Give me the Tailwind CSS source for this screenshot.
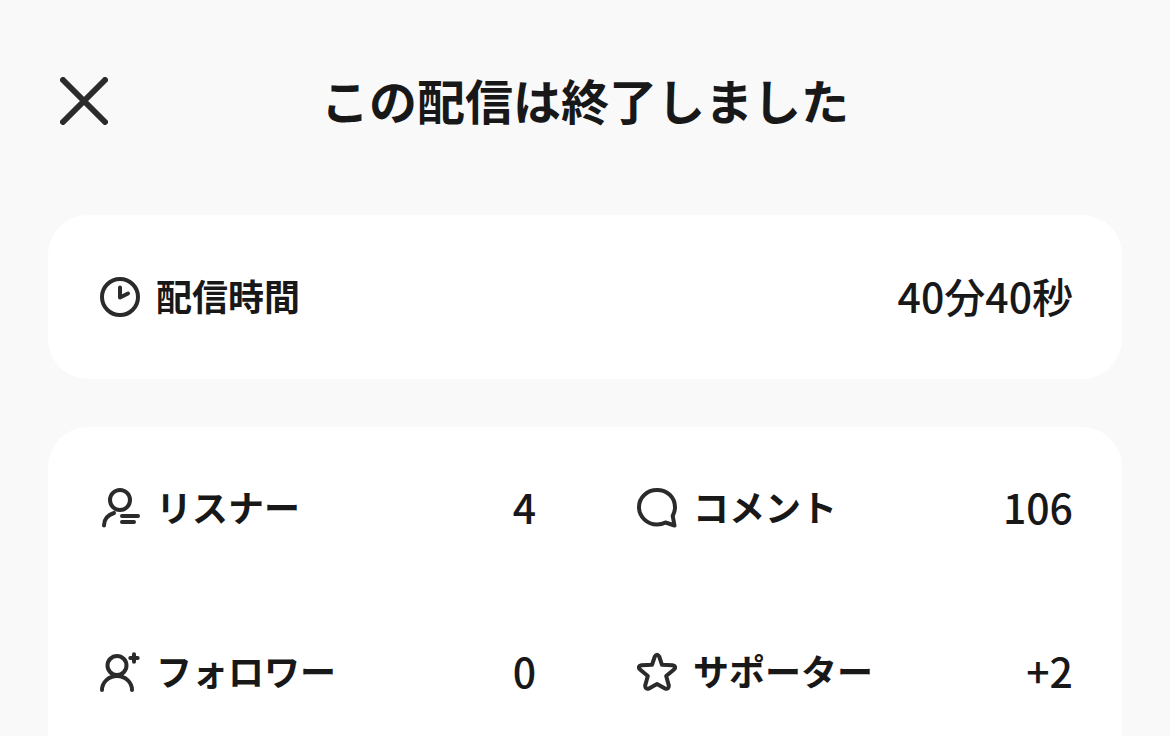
<!DOCTYPE html>
<html lang="ja">
<head>
  <meta charset="UTF-8" />
  <meta name="viewport" content="width=device-width, initial-scale=1.0" />
  <title>配信終了</title>
  <script src="https://cdn.jsdelivr.net/npm/@tailwindcss/browser@4"></script>
</head>
<body class="bg-[#f9f9f9] text-[#181818] font-['Noto_Sans_CJK_JP',sans-serif]">

<div class="min-h-screen flex flex-col px-12">

  <!-- Header -->
  <header class="grid grid-cols-[72px_1fr_72px] items-center pt-16 pb-[77px]">
    <button type="button" aria-label="閉じる" class="justify-self-center">
      <svg class="size-12" viewBox="0 0 48 48" fill="none" stroke="#2b2b2b" stroke-width="6" stroke-linecap="round">
        <path d="M3 3l42 42M45 3L3 45" />
      </svg>
    </button>
    <h1 class="pb-1 text-center text-5xl leading-[70px] font-bold">この配信は終了しました</h1>
  </header>

  <!-- Duration -->
  <section class="flex items-center justify-between py-[52px] pl-[52px] pr-[49px] rounded-[40px] bg-white">
    <div class="flex items-center gap-4">
      <svg class="size-10" viewBox="0 0 40 40" fill="none" stroke="#2b2b2b" stroke-width="4" stroke-linecap="round" stroke-linejoin="round">
        <circle cx="20" cy="20" r="18" />
        <path d="M20 10.500v10l8-4" />
      </svg>
      <h2 class="pb-1 text-4xl font-bold">配信時間</h2>
    </div>
    <p class="pb-1 text-[41px] leading-[56px] font-medium">40分40秒</p>
  </section>

  <!-- Stats -->
  <dl class="flex-1 grid grid-cols-2 content-start gap-x-[101px] gap-y-[104px] mt-12 pt-[51px] pl-[52px] pr-[49px] rounded-t-[40px] bg-white">
    <div class="flex items-center justify-between">
      <dt class="flex items-center gap-4">
        <svg class="size-10" viewBox="0 0 40 40" fill="none" stroke="#2b2b2b" stroke-width="4" stroke-linecap="round">
          <circle cx="20" cy="12" r="10" />
          <path d="M4 37.500c0-6 3.500-10.500 10-12.500M22 28h16M22 34h12" />
        </svg>
        <span class="pb-1 text-4xl font-bold">リスナー</span>
      </dt>
      <dd class="pb-1 text-[41px] leading-[56px] font-medium">4</dd>
    </div>

    <div class="flex items-center justify-between">
      <dt class="flex items-center gap-4">
        <svg class="size-10" viewBox="0 0 40 40" fill="none" stroke="#2b2b2b" stroke-width="4" stroke-linecap="round" stroke-linejoin="round">
          <path d="M28.500 34.500l9 3-1.800-9.500c1.500-2.800 2.300-5.600 2.300-8.500C38 9 30 2 20 2S2 9.500 2 19s8 17.500 18 17.500c3 0 5.900-.6 8.500-2z" />
        </svg>
        <span class="pb-1 text-4xl font-bold">コメント</span>
      </dt>
      <dd class="pb-1 text-[41px] leading-[56px] font-medium">106</dd>
    </div>

    <div class="flex items-center justify-between">
      <dt class="flex items-center gap-4">
        <svg class="size-10" viewBox="0 0 40 40" fill="none" stroke="#2b2b2b" stroke-width="4" stroke-linecap="round">
          <circle cx="17" cy="13.500" r="9.500" />
          <path d="M2 38a15 14 0 0 1 30 0M34 2.300v7.400M30.300 6h7.400" />
        </svg>
        <span class="pb-1 text-4xl font-bold">フォロワー</span>
      </dt>
      <dd class="pb-1 text-[41px] leading-[56px] font-medium">0</dd>
    </div>

    <div class="flex items-center justify-between">
      <dt class="flex items-center gap-4">
        <svg class="size-10" viewBox="0 0 40 40" fill="none" stroke="#2b2b2b" stroke-width="4" stroke-linejoin="round">
          <path d="M15 12.800l2.800-8.300q2.200-3.500 4.400 0l2.800 8.300 10.500.5q4.500 1 1.500 4.200l-7.800 6.500 2.600 9.500q.2 4-3.800 3L20 32l-8 4.500q-4 1-3.800-3l2.600-9.500L3 17.500q-3-3.200 1.500-4.200z" />
        </svg>
        <span class="pb-1 text-4xl font-bold">サポーター</span>
      </dt>
      <dd class="pb-1 text-[41px] leading-[56px] font-medium">+2</dd>
    </div>
  </dl>

</div>
</body>
</html>
